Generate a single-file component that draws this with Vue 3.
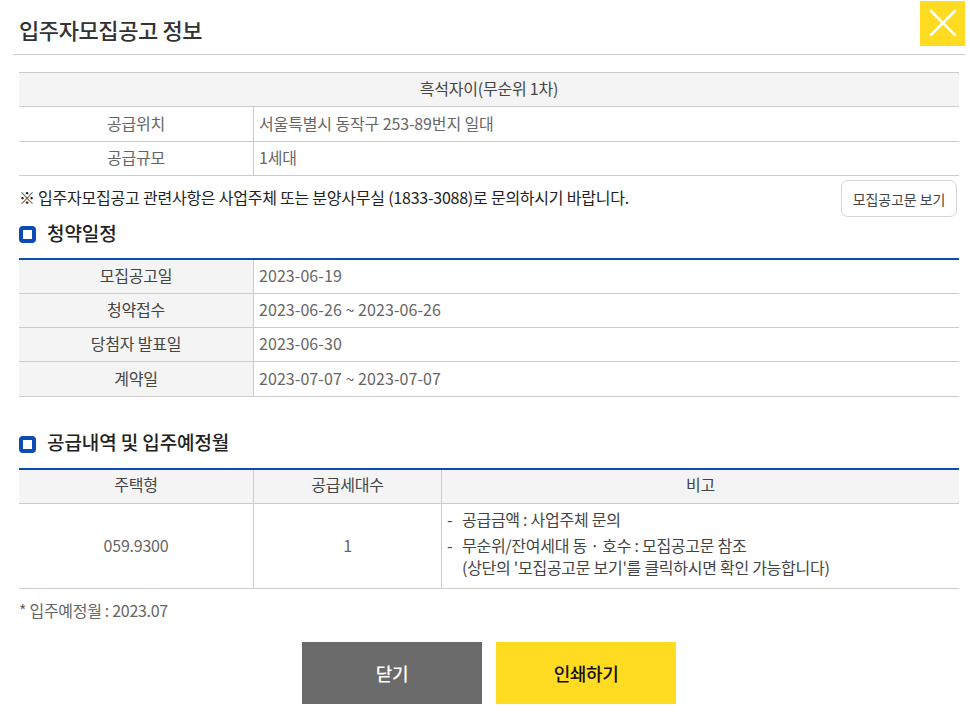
<script setup>
const scheduleRows = [
  ['모집공고일', '2023-06-19'],
  ['청약접수', '2023-06-26 ~ 2023-06-26'],
  ['당첨자 발표일', '2023-06-30'],
  ['계약일', '2023-07-07 ~ 2023-07-07'],
]
</script>

<template>
  <div class="page">
    <header class="head">
      <h1 class="title">입주자모집공고 정보</h1>
      <div class="close" aria-label="닫기">
        <svg width="45" height="45" viewBox="0 0 45 45">
          <path d="M11 10L34.8 33.8M34.8 10L11 33.8" stroke="#fff" stroke-width="2.6" stroke-linecap="round" fill="none" />
        </svg>
      </div>
    </header>

    <main class="body">
      <div class="tbl info">
        <div class="info-name">흑석자이(무순위 1차)</div>
        <div class="row r-a"><div class="k">공급위치</div><div class="v addr">서울특별시 동작구 253-89번지 일대</div></div>
        <div class="row r-b"><div class="k">공급규모</div><div class="v">1세대</div></div>
      </div>

      <div class="notice">
        <p>※ 입주자모집공고 관련사항은 사업주체 또는 분양사무실 (1833-3088)로 문의하시기 바랍니다.</p>
        <button class="doc-btn">모집공고문 보기</button>
      </div>

      <h2 class="sec sec1"><span class="mark"></span>청약일정</h2>
      <div class="tbl blue">
        <div v-for="r in scheduleRows" :key="r[0]" class="row sched">
          <div class="k shade">{{ r[0] }}</div>
          <div class="v date">{{ r[1] }}</div>
        </div>
      </div>

      <h2 class="sec sec2"><span class="mark"></span>공급내역 및 입주예정월</h2>
      <div class="tbl blue">
        <div class="supply sup-head">
          <div>주택형</div><div>공급세대수</div><div>비고</div>
        </div>
        <div class="supply sup-body">
          <div>059.9300</div>
          <div>1</div>
          <div class="notes">
            <p class="note first"><span class="dash">-</span>공급금액 : 사업주체 문의</p>
            <p class="note"><span class="dash">-</span>무순위/잔여세대 동 · 호수 : 모집공고문 참조<br>(상단의 '모집공고문 보기'를 클릭하시면 확인 가능합니다)</p>
          </div>
        </div>
      </div>

      <p class="foot">* 입주예정월 : 2023.07</p>

      <div class="actions">
        <button class="act gray">닫기</button>
        <button class="act yellow">인쇄하기</button>
      </div>
    </main>
  </div>
</template>

<style>
html, body { background: #fff; }
</style>

<style scoped>
.page {
  width: 970px;
  height: 718px;
  overflow: hidden;
  background: #fff;
  font-family: "Noto Sans CJK KR", "Noto Sans", sans-serif;
  font-size: 16px;
  color: #666;
  letter-spacing: -0.23px;
  box-sizing: border-box;
}
.head {
  margin: 0 5px 0 13px;
  height: 54px;
  border-bottom: 1px solid #ccc;
  display: flex;
  justify-content: space-between;
  align-items: flex-start;
}
.title {
  margin: 13px 0 0 6px;
  font-size: 22px;
  line-height: 32px;
  font-weight: 500;
  color: #333;
  letter-spacing: -0.4px;
}
.close {
  margin-top: 1px;
  width: 45px;
  height: 45px;
  background: #ffdc22;
}
.close svg { display: block; }
.body { padding: 17px 11px 0 19px; }
.tbl { border-bottom: 1px solid #ccc; }
.info { border-top: 1px solid #ccc; }
.info-name {
  height: 33px;
  line-height: 31px;
  background: #f4f4f4;
  border-bottom: 1px solid #ccc;
  text-align: center;
  color: #444;
}
.row { display: flex; }
.row + .row { border-top: 1px solid #ccc; }
.r-a { height: 34px; }
.r-b { height: 33px; }
.r-a > div { padding-bottom: 2px; }
.r-b > div { padding-bottom: 4px; }
.k {
  width: 234px;
  flex: none;
  box-sizing: content-box;
  border-right: 1px solid #ccc;
  text-align: center;
  display: flex;
  align-items: center;
  justify-content: center;
}
.v {
  flex: 1;
  padding-left: 5px;
  display: flex;
  align-items: center;
}
.addr { letter-spacing: -0.13px; }
.date { letter-spacing: 0.07px; }
.notice {
  height: 43px;
  margin-right: 2px;
  display: flex;
  justify-content: space-between;
  align-items: flex-start;
}
.notice p {
  margin: 7px 0 0;
  line-height: 28px;
  color: #222;
  height: 28px;
}
.doc-btn {
  margin: 4px 0 0;
  width: 116px;
  height: 37px;
  padding: 0;
  background: #fff;
  border: 1px solid #d5d5d5;
  border-radius: 7px;
  font: inherit;
  font-size: 14px;
  letter-spacing: -0.1px;
  color: #444;
}
.sec {
  margin: 0;
  display: flex;
  align-items: center;
  height: 28px;
  box-sizing: border-box;
  font-size: 19px;
  font-weight: 500;
  color: #222;
  letter-spacing: -0.1px;
}
.sec1 { margin-bottom: 11px; padding-bottom: 2px; }
.sec2 { margin-top: 32px; margin-bottom: 11px; padding-bottom: 4px; }
.mark {
  width: 17px;
  height: 17px;
  box-sizing: border-box;
  border: 4px solid #0d4cb3;
  border-radius: 4px;
  background: #fff;
  margin-right: 11px;
  flex: none;
}
.sec1 .mark { margin-top: 4px; }
.sec2 .mark { margin-top: 6px; }
.blue { border-top: 2px solid #0d4cb3; }
.sched { height: 33px; }
.sched:last-child { height: 34px; }
.sched > div { padding-bottom: 4px; }
.sched:last-child > div { padding-bottom: 2px; }
.shade { background: #f4f4f4; color: #444; }
.supply {
  display: grid;
  grid-template-columns: 234px 188px 1fr;
  text-align: center;
}
.supply > div + div { border-left: 1px solid #ccc; }
.sup-head {
  height: 33px;
  line-height: 29px;
  background: #f4f4f4;
  border-bottom: 1px solid #ccc;
  color: #444;
}
.sup-body { height: 84px; line-height: 82px; }
.notes { text-align: left; line-height: 22px; padding: 4px 0 0 5px; }
.note { margin: 0; position: relative; padding-left: 15px; color: #444; letter-spacing: -0.27px; }
.note.first { margin-bottom: 4px; }
.dash { position: absolute; left: 0; top: 0; }
.foot { margin: 10px 0 0; line-height: 22px; color: #666; letter-spacing: -0.3px; }
.actions {
  margin-top: 21px;
  display: flex;
  justify-content: center;
  gap: 14px;
}
.act {
  width: 180px;
  height: 62px;
  border: 0;
  padding: 0;
  font: inherit;
  font-size: 18px;
  font-weight: 500;
  letter-spacing: -0.4px;
}
.gray { background: #6b6b6b; color: #fff; }
.yellow { background: #ffdc22; color: #111; }
</style>
